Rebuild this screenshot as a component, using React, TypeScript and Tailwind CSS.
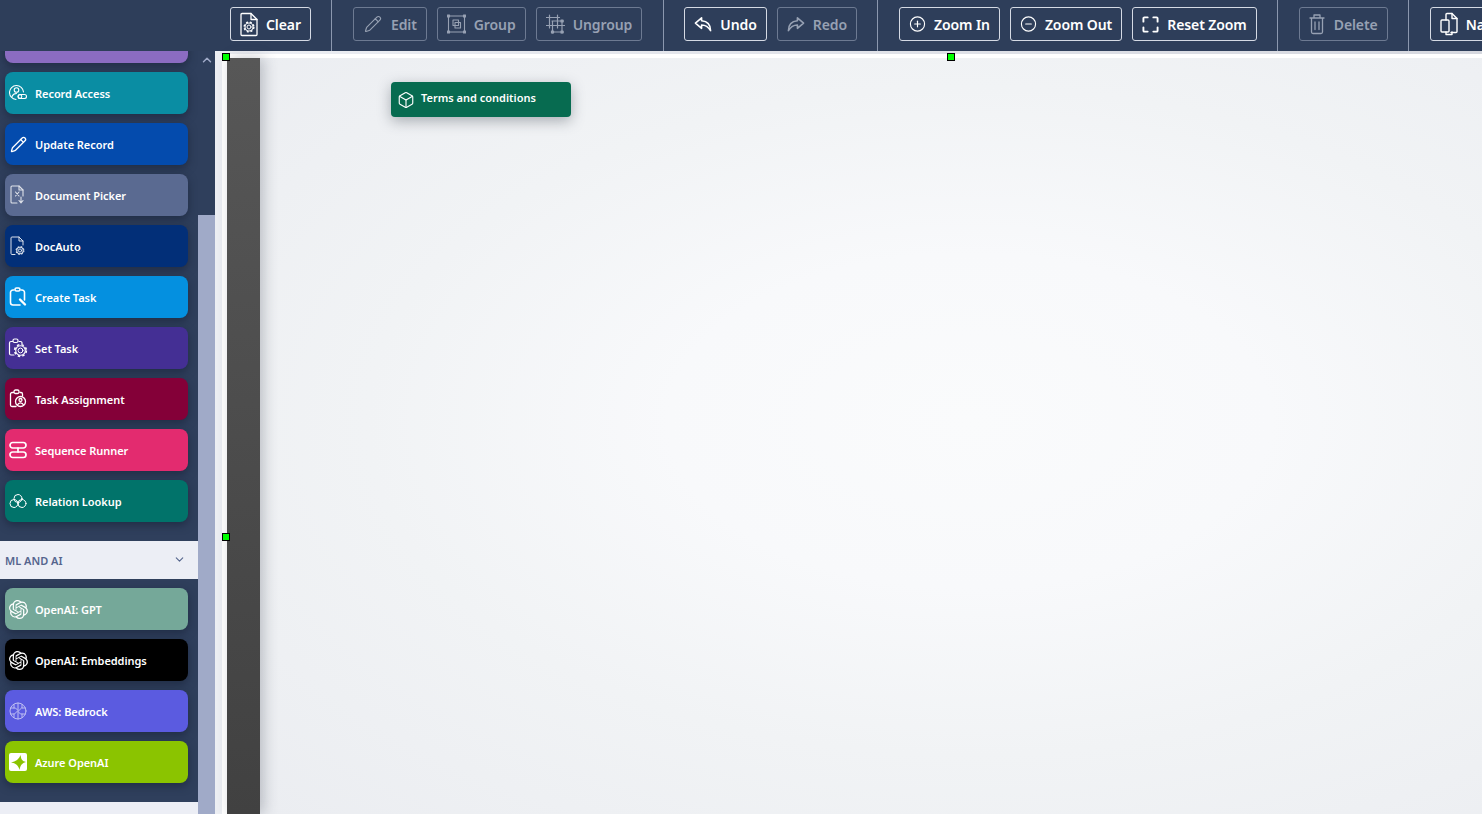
import React from "react";
import { Pencil, CirclePlus, CircleMinus, ChevronDown, ChevronUp, Box } from "lucide-react";
import { SiOpenai } from "react-icons/si";

const S = { fill: "none", stroke: "currentColor", strokeWidth: 1.5, strokeLinecap: "round" as const, strokeLinejoin: "round" as const };

function Gear({ cx, cy, r }: { cx: number; cy: number; r: number }) {
  return (
    <g>
      <circle cx={cx} cy={cy} r={r * 0.8} strokeWidth={1} />
      <circle cx={cx} cy={cy} r={r * 1.6} strokeWidth={1.1} />
      <circle cx={cx} cy={cy} r={r * 1.95} strokeWidth={r * 0.55} strokeLinecap="butt" strokeDasharray={`${r * 0.8} ${r * 0.75}`} />
    </g>
  );
}
function ClearIcon() {
  return (
    <svg width="18" height="25" viewBox="0 0 18 25" {...S} strokeWidth={1.3}>
      <path d="M1 2.500a1 1 0 0 1 1-1H11l6 6v15a1 1 0 0 1-1 1H2a1 1 0 0 1-1-1Z" />
      <path d="M11 1.500V7.500h6" />
      <Gear cx={9} cy={15} r={2.500} />
    </svg>
  );
}
function GroupIcon() {
  return (
    <svg width="19" height="22" viewBox="0 0 19 22" {...S} strokeWidth={1.1}>
      <rect x="1.500" y="3" width="16" height="16" />
      <rect x="6" y="7" width="5.500" height="5.500" />
      <rect x="8" y="9.500" width="5.500" height="5.500" />
      <path d="M.5 2h2v2h-2zM16.500 2h2v2h-2zM.5 18h2v2h-2zM16.500 18h2v2h-2z" fill="currentColor" />
    </svg>
  );
}
function UngroupIcon() {
  return (
    <svg width="19" height="22" viewBox="0 0 19 22" {...S} strokeWidth={1.2}>
      <path d="M3.500 2v13M.5 4.500h13M11.500 2v13M.5 12.500h18M6 8h11.500M6 19h11.500M6.500 8v12M16 8v12" />
      <path d="M15 7h2v2h-2zM15 18h2v2h-2zM5.500 18h2v2h-2z" fill="currentColor" />
    </svg>
  );
}
function TrashIcon() {
  return (
    <svg width="16" height="22" viewBox="0 0 16 22" {...S} strokeWidth={1.3}>
      <path d="M1 5h14M5 4.500V2h6v2.500M2.500 5v14a1.500 1.500 0 0 0 1.500 1.500h8a1.500 1.500 0 0 0 1.500-1.500V5M6 9v7.500M10 9v7.500" />
    </svg>
  );
}
function Corners() {
  return (
    <svg width="17" height="17" viewBox="0 0 18 18" {...S} strokeWidth={2}>
      <path d="M1.500 6V2.500a1 1 0 0 1 1-1H6M12 1.500h3.500a1 1 0 0 1 1 1V6M16.500 12v3.500a1 1 0 0 1-1 1H12M6 16.500H2.500a1 1 0 0 1-1-1V12" />
    </svg>
  );
}
function Copies() {
  return (
    <svg width="18" height="24" viewBox="0 0 18 24" {...S} strokeWidth={1.4}>
      <path d="M6 8V2.500a1 1 0 0 1 1-1h5l5 5v13a1 1 0 0 1-1 1h-5" />
      <path d="M12 1.500v5h5" />
      <rect x="1" y="8" width="8" height="12" rx="1" />
      <path d="M6 20v2.500h6V20" />
    </svg>
  );
}
function ReplyArrow({ flip }: { flip?: boolean }) {
  return (
    <svg width="19" height="17" viewBox="0 0 19 17" {...S} strokeWidth={1.7} className={flip ? "-scale-x-100" : ""}>
      <path d="M8 1.500 1.500 7 8 12.500V9c4.500 0 7 1.700 9.500 6 0-6-3.500-10-9.500-10.500Z" />
    </svg>
  );
}
function RecordAccessIcon() {
  return (
    <svg width="18" height="18" viewBox="0 0 18 18" {...S} strokeWidth={1.1}>
      <path d="M14.500 8A7 7 0 1 0 7 15.500" />
      <circle cx="7.500" cy="6" r="2.300" />
      <path d="M3 12.500C3.700 10.500 5.400 9.500 7.500 9.500" />
      <rect x="9" y="10.500" width="8.500" height="4" rx="2" />
      <circle cx="11" cy="12.500" r="1.800" />
    </svg>
  );
}
function PickerIcon() {
  return (
    <svg width="18" height="20" viewBox="0 0 18 20" {...S} strokeWidth={1.1} className="opacity-80">
      <path d="M8 18H3a1 1 0 0 1-1-1V2a1 1 0 0 1 1-1h7l4 4v6" />
      <path d="M10 1v4h4M6.500 7l3.500 4M10 7l-3.500 4" />
      <path d="M12 12v5M10 15.500l2 2.500 2-2.500" />
    </svg>
  );
}
function DocAutoIcon() {
  return (
    <svg width="18" height="20" viewBox="0 0 18 20" {...S} strokeWidth={1} className="opacity-85">
      <path d="M6 18.500H3a1 1 0 0 1-1-1V2a1 1 0 0 1 1-1h7l4 4v4" />
      <path d="M10 1v4h4" />
      <Gear cx={11} cy={14.500} r={2} />
    </svg>
  );
}
function CreateTaskIcon() {
  return (
    <svg width="18" height="20" viewBox="0 0 18 20" {...S} strokeWidth={1.6}>
      <path d="M5 3H4A2.500 2.500 0 0 0 1.500 5.500v10A2.500 2.500 0 0 0 4 18h7M12 3h1a2.500 2.500 0 0 1 2.500 2.500V13" />
      <rect x="6" y="1" width="5" height="3" rx="1.500" />
      <path d="M11 12.500l5 5" strokeWidth={2.400} />
    </svg>
  );
}
function SetTaskIcon() {
  return (
    <svg width="20" height="20" viewBox="0 0 20 20" {...S} strokeWidth={1.2}>
      <path d="M4.500 3.500H3A1.500 1.500 0 0 0 1.500 5v10.500A1.500 1.500 0 0 0 3 17h3M11 3.500h1.500A1.500 1.500 0 0 1 14 5v1" />
      <rect x="5" y="1" width="5" height="3.500" rx="1.500" />
      <Gear cx={12.500} cy={12.500} r={3} />
    </svg>
  );
}
function AssignIcon() {
  return (
    <svg width="18" height="20" viewBox="0 0 18 20" {...S} strokeWidth={1.3}>
      <path d="M4.500 3.500H3A1.500 1.500 0 0 0 1.500 5v11A1.500 1.500 0 0 0 3 17.500h4M11 3.500h1A1.500 1.500 0 0 1 13.500 5v2" />
      <rect x="5" y="1" width="5" height="3.500" rx="1.500" />
      <circle cx="11.500" cy="12.500" r="5" />
      <circle cx="11.500" cy="11" r="1.500" />
      <path d="M8.500 16c.5-1.500 1.700-2.200 3-2.200s2.500.7 3 2.200" />
    </svg>
  );
}
function SequenceIcon() {
  return (
    <svg width="18" height="18" viewBox="0 0 18 18" {...S} strokeWidth={1.7}>
      <rect x="1" y="1.500" width="16" height="5.500" rx="2.700" />
      <rect x="1" y="11" width="16" height="5.500" rx="2.700" />
      <path d="M9 7v4" />
    </svg>
  );
}
function RelationIcon() {
  return (
    <svg width="18" height="18" viewBox="0 0 18 18" {...S} strokeWidth={1}>
      <circle cx="9" cy="6.500" r="4" />
      <circle cx="5" cy="11.500" r="4" />
      <circle cx="13" cy="11.500" r="4" />
    </svg>
  );
}
function BrainIcon() {
  return (
    <svg width="18" height="18" viewBox="0 0 18 18" {...S} strokeWidth={1} className="opacity-60">
      <circle cx="9" cy="9" r="8" />
      <path d="M9 1v16M1.500 6h5l2 2M1.500 12h4l3-3M16.500 6h-4l-3 3M16.500 12h-5l-2-2M5 2.500v3.500M13 2.500V6M5 15.500V12M13 15.500V12" />
    </svg>
  );
}
function AzureIcon() {
  return (
    <span className="flex h-[18px] w-[18px] items-center justify-center rounded-[2px] bg-white">
      <svg width="15" height="15" viewBox="0 0 14 14">
        <path d="M9 0C9.300 4 10.500 5.800 14 6.500 10.500 7.200 8.800 9.500 8 14 6.800 9.500 4.500 7.800 0 7 4.500 6.300 7.500 4 9 0Z" fill="#8bc400" />
      </svg>
    </span>
  );
}

function ToolButton({ icon, label, disabled, iconBox = "w-[18px]" }: { icon: React.ReactNode; label: string; disabled?: boolean; iconBox?: string }) {
  return (
    <button
      className={`flex h-[34px] shrink-0 items-center rounded-[3px] border px-[9px] text-[14px] font-semibold tracking-[-0.09px] ${
        disabled ? "border-[#6d7a92] text-[#97a1b3]" : "border-[#d5dae4] text-white"
      }`}
    >
      <span className={`mr-[8px] flex items-center justify-center ${iconBox}`}>{icon}</span>
      <span>{label}</span>
    </button>
  );
}

function Sep() {
  return <div className="mx-[20.500px] h-full w-px shrink-0 bg-[#8b97ae]" />;
}

function Group({ children }: { children: React.ReactNode }) {
  return <div className="flex shrink-0 items-center gap-[10px] pb-[3px]">{children}</div>;
}

function Tile({ color, icon, label }: { color: string; icon: React.ReactNode; label: string }) {
  return (
    <div className={`flex h-[42px] w-[183px] shrink-0 items-center rounded-[8px] text-[11px] font-semibold tracking-[-0.05px] text-white shadow-[0_3px_9px_rgba(20,30,50,0.55)] ${color}`}>
      <span className="flex w-[26px] shrink-0 items-center justify-center">{icon}</span>
      <span className="ml-[4px] leading-none">{label}</span>
    </div>
  );
}

function Handle({ className }: { className: string }) {
  return <div className={`absolute z-20 h-[8px] w-[8px] border border-black bg-[#00ff00] ${className}`} />;
}

export default function App() {
  return (
    <div className="flex h-[814px] w-[1482px] flex-col overflow-hidden bg-[#2f3f5c] font-['Noto_Sans','Open_Sans',sans-serif]">
      <header className="flex h-[51px] shrink-0 items-stretch overflow-hidden bg-[#2e3e5a] pl-[230px]">
        <Group><ToolButton icon={<ClearIcon />} label="Clear" /></Group>
        <Sep />
        <Group>
          <ToolButton disabled iconBox="w-[20px]" icon={<Pencil size={18} strokeWidth={1.5} />} label="Edit" />
          <ToolButton disabled iconBox="w-[19px]" icon={<GroupIcon />} label="Group" />
          <ToolButton disabled iconBox="w-[19px]" icon={<UngroupIcon />} label="Ungroup" />
        </Group>
        <Sep />
        <Group>
          <ToolButton icon={<ReplyArrow />} label="Undo" />
          <ToolButton disabled icon={<ReplyArrow flip />} label="Redo" />
        </Group>
        <Sep />
        <Group>
          <ToolButton iconBox="w-[17px]" icon={<CirclePlus size={18} strokeWidth={1.6} />} label="Zoom In" />
          <ToolButton iconBox="w-[17px]" icon={<CircleMinus size={18} strokeWidth={1.6} />} label="Zoom Out" />
          <ToolButton iconBox="w-[17px]" icon={<Corners />} label="Reset Zoom" />
        </Group>
        <Sep />
        <Group><ToolButton disabled iconBox="w-[17px]" icon={<TrashIcon />} label="Delete" /></Group>
        <Sep />
        <Group><ToolButton icon={<Copies />} label="Name" /></Group>
      </header>

      <main className="flex min-h-0 flex-1">
        <aside className="flex w-[198px] shrink-0 flex-col overflow-hidden bg-[#2f3f5c]">
          <div className="-mt-[30px] flex flex-col gap-[9px] pl-[5px]">
            <Tile color="bg-[#8b6cc1]" icon={null} label="" />
            <Tile color="bg-[#0a8da3]" icon={<RecordAccessIcon />} label="Record Access" />
            <Tile color="bg-[#044bad]" icon={<Pencil size={17} strokeWidth={1.8} />} label="Update Record" />
            <Tile color="bg-[#5a6a91]" icon={<PickerIcon />} label="Document Picker" />
            <Tile color="bg-[#022f78]" icon={<DocAutoIcon />} label="DocAuto" />
            <Tile color="bg-[#0490e0]" icon={<CreateTaskIcon />} label="Create Task" />
            <Tile color="bg-[#442f94]" icon={<SetTaskIcon />} label="Set Task" />
            <Tile color="bg-[#840038]" icon={<AssignIcon />} label="Task Assignment" />
            <Tile color="bg-[#e32b6f]" icon={<SequenceIcon />} label="Sequence Runner" />
            <Tile color="bg-[#01736a]" icon={<RelationIcon />} label="Relation Lookup" />
          </div>
          <div className="mt-[19px] flex h-[38px] shrink-0 items-center justify-between bg-[#eceef5] pl-[5px] pr-[12px] text-[11px] font-semibold text-[#55658d]">
            <span className="mt-[2px]">ML AND AI</span>
            <ChevronDown size={13} strokeWidth={2} className="-mt-[2px]" />
          </div>
          <div className="mt-[9px] flex flex-col gap-[9px] pl-[5px]">
            <Tile color="bg-[#75a899]" icon={<SiOpenai size={19} />} label="OpenAI: GPT" />
            <Tile color="bg-black" icon={<SiOpenai size={19} />} label="OpenAI: Embeddings" />
            <Tile color="bg-[#5b5be0]" icon={<BrainIcon />} label="AWS: Bedrock" />
            <Tile color="bg-[#8bc400]" icon={<AzureIcon />} label="Azure OpenAI" />
          </div>
          <div className="mt-[19px] h-[20px] shrink-0 bg-[#eceef5]" />
        </aside>

        <div className="flex w-[17px] shrink-0 flex-col">
          <div className="flex h-[164px] justify-center pt-[2px] text-[#a0aac8]">
            <ChevronUp size={14} strokeWidth={2.5} />
          </div>
          <div className="flex-1 bg-[#a0aac8]" />
        </div>

        <section className="relative flex min-w-0 flex-1 flex-col bg-[linear-gradient(90deg,#eceef3,#d6d8df)] pl-[7px] pt-[3px]">
          <div className="flex flex-1 flex-col bg-white pl-[5px] pt-[4px]">
            <div className="flex flex-1">
              <div className="relative z-10 w-[33px] shrink-0 bg-[linear-gradient(180deg,#575757,#414141)] shadow-[4px_0_14px_rgba(70,75,90,0.3)]" />
              <div className="flex-1 bg-[radial-gradient(ellipse_at_58%_48%,#fafbfc_0%,#f8f9fb_30%,#f1f3f5_60%,#ebedf1_100%)]" />
            </div>
          </div>

          <Handle className="left-[7px] top-[2px]" />
          <Handle className="left-[732px] top-[2px]" />
          <Handle className="left-[7px] top-[482px]" />

          <div className="absolute left-[176px] top-[31px] flex h-[35px] w-[180px] items-start rounded-[4px] bg-[#076b50] pl-[6px] pt-[8px] text-[11px] font-semibold text-white shadow-[0_4px_14px_rgba(60,70,80,0.4)]">
            <Box size={18} strokeWidth={1.5} className="mt-[1px]" />
            <span className="ml-[6px] leading-[16px]">Terms and conditions</span>
          </div>
        </section>
      </main>
    </div>
  );
}
